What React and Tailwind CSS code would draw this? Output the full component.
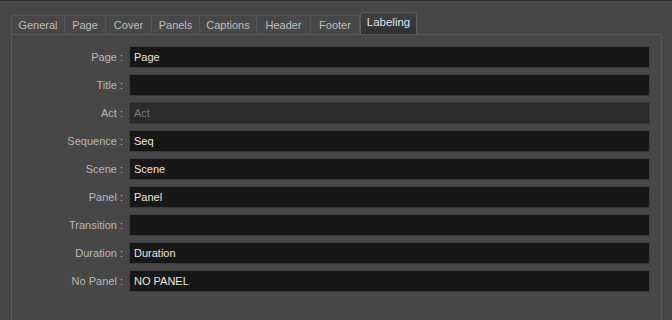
import { useState } from 'react'

const tabs = [
  { name: 'General', w: 'w-[54px]' },
  { name: 'Page', w: 'w-[41px]' },
  { name: 'Cover', w: 'w-[46px]' },
  { name: 'Panels', w: 'w-[48px]' },
  { name: 'Captions', w: 'w-[57px]' },
  { name: 'Header', w: 'w-[54px]' },
  { name: 'Footer', w: 'w-[49px]' },
  { name: 'Labeling', w: 'w-[57px]' },
]

const fields = [
  { label: 'Page', value: 'Page' },
  { label: 'Title', value: '' },
  { label: 'Act', value: 'Act', disabled: true },
  { label: 'Sequence', value: 'Seq' },
  { label: 'Scene', value: 'Scene' },
  { label: 'Panel', value: 'Panel' },
  { label: 'Transition', value: '' },
  { label: 'Duration', value: 'Duration' },
  { label: 'No Panel', value: 'NO PANEL' },
]

export default function App() {
  const [active, setActive] = useState('Labeling')
  const [values, setValues] = useState(Object.fromEntries(fields.map(f => [f.label, f.value])))

  return (
    <div className="w-[672px] h-[320px] overflow-hidden bg-[#474747] border-t border-[#2c2829] font-['Liberation_Sans',Arial,sans-serif] text-[11px]">
      <div className="flex items-end pl-[11px] pt-[10px] h-[33px]">
        {tabs.map((t, i) => (
          t.name === active ? (
            <button key={t.name} onClick={() => setActive(t.name)}
              className={`${t.w} h-[22px] rounded-t-[3px] border border-b-0 border-[#5c5c5c] bg-gradient-to-b from-[#414141] to-[#303030] text-[11.5px] text-[#dce6ee] leading-none pb-[2px]`}>
              {t.name}
            </button>
          ) : (
            <button key={t.name} onClick={() => setActive(t.name)}
              className={`${t.w} h-[19px] border-t border-[#555555] ${i === 0 ? 'border-l' : ''} border-r bg-[#484848] text-[11px] text-[#bdbdbd] leading-none pt-[1px]`}>
              {t.name}
            </button>
          )
        ))}
      </div>
      <div className="ml-[11px] w-[651px] h-[300px] border-t border-l border-r border-[#5a5a5a] pt-[11px]">
        <div className="flex flex-col gap-[6px]">
          {fields.map(f => (
            <div key={f.label} className="flex items-center h-[22px]">
              <span className="w-[111px] text-right text-[#b9b9b9]">{f.label} :</span>
              <input
                value={values[f.label]}
                disabled={f.disabled}
                onChange={e => setValues({ ...values, [f.label]: e.target.value })}
                className={`ml-[6px] w-[521px] h-[22px] px-[4px] border outline-none text-[11px] ${f.disabled ? 'bg-[#2a2a2a] border-[#363636] text-[#7a7a7a]' : 'bg-[#171717] border-[#3c3c3c] text-[#efe6dc]'}`}
              />
            </div>
          ))}
        </div>
      </div>
    </div>
  )
}
